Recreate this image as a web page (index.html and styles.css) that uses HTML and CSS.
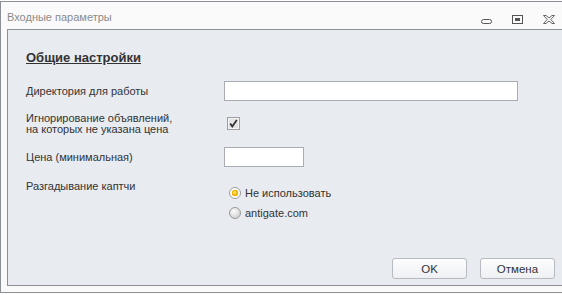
FILE: index.html
```html
<!DOCTYPE html>
<html lang="ru">
<head>
    <meta charset="UTF-8">
    <title>Входные параметры</title>
    <link rel="stylesheet" href="styles.css">
</head>
<body>
    <div class="window">
        <div class="titlebar">
            <span class="title">Входные параметры</span>
            <div class="controls">
                <svg width="11" height="9" viewBox="0 0 11 9"><rect x="0.5" y="4.5" width="10" height="4" rx="2" fill="none" stroke="#555"/></svg>
                <svg width="11" height="9" viewBox="0 0 11 9"><rect x="0.5" y="0.5" width="10" height="8" fill="none" stroke="#555"/><rect x="3" y="3" width="5" height="3" fill="#555"/></svg>
                <svg width="12" height="9" viewBox="0 0 12 9"><path d="M0.5 0.5 H3 L6 3 L9 0.5 H11.5 L7.8 4.5 L11.5 8.5 H9 L6 6 L3 8.5 H0.5 L4.2 4.5 Z" fill="none" stroke="#555" stroke-width="0.9" stroke-linejoin="round"/></svg>
            </div>
        </div>

        <div class="panel">
            <h2 class="heading">Общие настройки</h2>

            <div class="form">
                <div class="row">
                    <label class="label">Директория для работы</label>
                    <input type="text" class="field field-wide">
                </div>
                <div class="row row-top">
                    <label class="label label-two">Игнорирование объявлений,<br>на которых не указана цена</label>
                    <span class="checkbox">
                        <svg width="13" height="13" viewBox="0 0 13 13"><rect x="0.5" y="0.5" width="12" height="12" fill="#e4e4e4" stroke="#9c9ea3"/><rect x="1.5" y="1.5" width="10" height="10" fill="none" stroke="#f4f4f4"/><path d="M3.2 6.6 L5.3 9.4 L9.8 3" fill="none" stroke="#333" stroke-width="1.8"/></svg>
                    </span>
                </div>
                <div class="row">
                    <label class="label">Цена (минимальная)</label>
                    <input type="text" class="field field-short">
                </div>
                <div class="row row-top row-captcha">
                    <label class="label">Разгадывание каптчи</label>
                    <div class="radios">
                        <div class="radio">
                            <svg width="12" height="12" viewBox="0 0 12 12"><circle cx="6" cy="6" r="5.5" fill="#fff" stroke="#9a9a9a"/><circle cx="6" cy="6" r="3.2" fill="#f2b300"/><circle cx="5.6" cy="5.5" r="1.7" fill="#ffd95a"/></svg>
                            <span>Не использовать</span>
                        </div>
                        <div class="radio">
                            <svg width="12" height="12" viewBox="0 0 12 12"><defs><radialGradient id="g" cx="0.4" cy="0.35" r="0.7"><stop offset="0" stop-color="#fbfbfb"/><stop offset="1" stop-color="#cfcfcf"/></radialGradient></defs><circle cx="6" cy="6" r="5.5" fill="url(#g)" stroke="#9a9a9a"/></svg>
                            <span>antigate.com</span>
                        </div>
                    </div>
                </div>
            </div>

            <div class="footer">
                <button class="btn">OK</button>
                <button class="btn">Отмена</button>
            </div>
        </div>
    </div>
</body>
</html>
```

FILE: styles.css
```css
html, body {
    margin: 0;
    padding: 0;
    overflow: hidden;
    background: #fff;
}
body {
    padding-top: 1px;
    font-family: "Liberation Sans", Arial, sans-serif;
    font-size: 11px;
    color: #333;
}
.window {
    width: 570px;
    height: 292px;
    box-sizing: border-box;
    border: 1px solid #8c8f96;
    border-right: none;
    background: #fafafa;
    display: flex;
    flex-direction: column;
    padding-bottom: 6px;
}
.titlebar {
    height: 27px;
    display: flex;
    align-items: flex-start;
    padding: 0 15px 0 6px;
}
.title {
    font-size: 11px;
    line-height: 14px;
    padding-top: 8px;
    color: #8b8b8b;
}
.controls {
    margin-left: auto;
    display: flex;
    gap: 20px;
    padding-top: 13px;
}
.panel {
    flex: 1;
    margin-left: 6px;
    border: 1px solid #8c8f96;
    border-right: none;
    background: #e8ebf0;
    display: flex;
    flex-direction: column;
    padding-left: 18px;
}
.heading {
    margin: 20px 0 0;
    font-size: 13px;
    line-height: 16px;
    font-weight: bold;
    text-decoration: underline;
    color: #333;
}
.form {
    margin-top: 15px;
    display: flex;
    flex-direction: column;
    gap: 12px;
}
.row {
    display: flex;
    align-items: center;
}
.row-top {
    align-items: flex-start;
}
.row-captcha {
    margin-top: 1px;
}
.label {
    width: 198px;
    line-height: 13px;
    color: #333;
}
.label-two {
    line-height: 11px;
}
.field {
    height: 20px;
    box-sizing: border-box;
    border: 1px solid #a9acb3;
    background: #fff;
    margin: 0;
    padding: 0 3px;
}
.field-wide {
    width: 294px;
}
.field-short {
    width: 80px;
}
.checkbox {
    display: flex;
    margin: 4px 0 0 3px;
}
.radios {
    margin-top: 3px;
    display: flex;
    flex-direction: column;
}
.radio {
    height: 20px;
    display: flex;
    align-items: center;
    gap: 4px;
    margin-left: 5px;
    font-size: 11px;
}
.footer {
    margin-top: auto;
    display: flex;
    justify-content: flex-end;
    gap: 13px;
    padding: 0 15px 6px 0;
}
.btn {
    width: 75px;
    height: 21px;
    border: 1px solid #b7bac0;
    border-radius: 3px;
    background: linear-gradient(#fdfdfd, #eef0f3);
    font-family: "Liberation Sans", Arial, sans-serif;
    font-size: 11.5px;
    color: #333;
    padding: 0;
}
```
